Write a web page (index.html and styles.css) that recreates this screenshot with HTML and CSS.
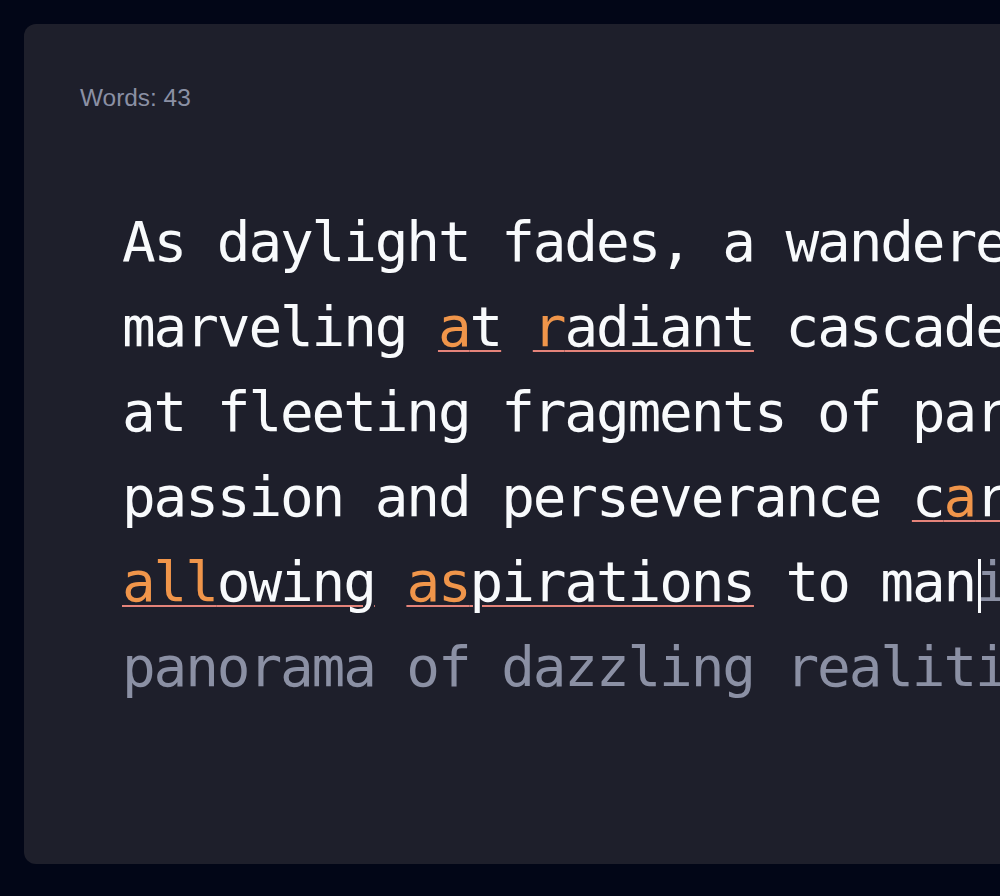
FILE: index.html
```html
<!DOCTYPE html>
<html lang="en">
<head>
<meta charset="utf-8">
<title>Typing test</title>
<link rel="stylesheet" href="styles.css">
</head>
<body>
<main class="stage">
  <section class="card">
    <div class="counter">Words: 43</div>
    <div class="passage">
      <div class="line"><span class="ok">As daylight fades, a wanderer pauses on the quiet hill,</span></div>
      <div class="line"><span class="ok">marveling </span><span class="word bad"><span class="err">a</span><span class="ok">t</span></span><span class="ok"> </span><span class="word bad"><span class="err">r</span><span class="ok">adiant</span></span><span class="ok"> cascades of color above,</span></div>
      <div class="line"><span class="ok">at fleeting fragments of paradise. Such moments of</span></div>
      <div class="line"><span class="ok">passion and perseverance </span><span class="word bad"><span class="ok">c</span><span class="err">a</span><span class="ok">rry</span></span><span class="ok"> the heart forward,</span></div>
      <div class="line"><span class="word bad"><span class="err">all</span><span class="ok">owing</span></span><span class="ok"> </span><span class="word bad"><span class="err">as</span><span class="ok">pirations</span></span><span class="ok"> to man</span><span class="todo caret">ifest into a vast</span></div>
      <div class="line"><span class="todo">panorama of dazzling realities.</span></div>
    </div>
  </section>
</main>
</body>
</html>
```
FILE: styles.css
```css
html, body {
  margin: 0;
  padding: 0;
  overflow: hidden;
  background: #020617;
}

.stage {
  padding: 24px;
  width: 1600px;
}

.card {
  box-sizing: border-box;
  height: 840px;
  background: #1e1f2b;
  border-radius: 12px;
  padding: 60px 56px;
}

.counter {
  font-family: "Liberation Sans", Arial, sans-serif;
  font-size: 24.4px;
  line-height: 28px;
  color: #8b90a4;
}

.passage {
  margin-top: 87px;
  padding-left: 42px;
  font-family: "DejaVu Sans Mono", Menlo, monospace;
  font-size: 56px;
  letter-spacing: -2.12px;
  line-height: 85px;
}

.line {
  white-space: pre;
}

.ok {
  color: #f8fafc;
}

.err {
  color: #f0954a;
}

.todo {
  color: #8b90a4;
}

.word.bad {
  text-decoration-line: underline;
  text-decoration-color: #e5837a;
  text-decoration-thickness: 2px;
  text-underline-offset: 4px;
}

.caret {
  position: relative;
}

.caret::before {
  content: "";
  position: absolute;
  left: 3px;
  top: 10px;
  width: 3px;
  height: 54px;
  background: #f8fafc;
}
```
